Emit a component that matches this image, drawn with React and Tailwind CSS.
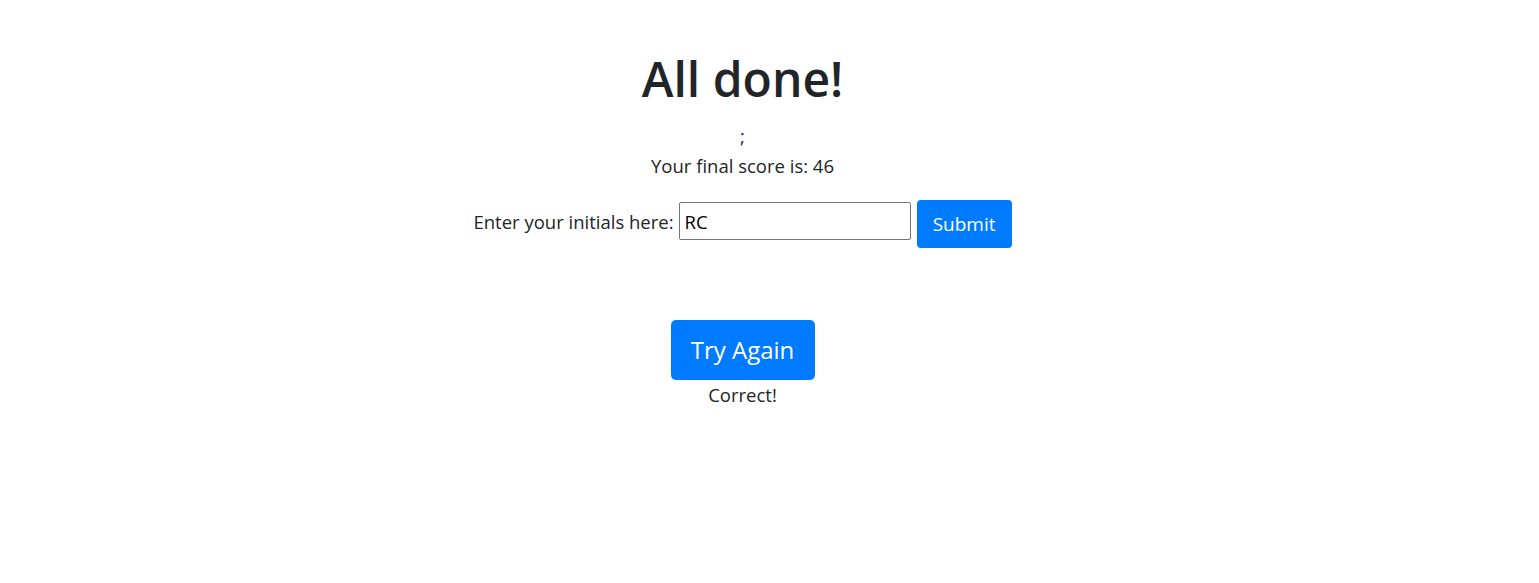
import React, { useState } from 'react';

const App = () => {
  const [initials, setInitials] = useState('RC');

  return (
    <div className="min-h-screen bg-white text-[#212529] font-['Open_Sans',sans-serif]">
      <div className="flex flex-col items-center pr-[54px] pt-[50px] text-center">
        <h1 className="text-[48px] leading-[58px] font-semibold">All done!</h1>
        <p className="mt-[16px] text-[18.5px] leading-[24px]">;</p>
        <p className="mt-[6px] text-[18.5px] leading-[24px]">Your final score is: 46</p>
        <form className="mt-[22px] flex items-start text-[18.5px]" onSubmit={(e) => e.preventDefault()}>
          <label htmlFor="initials" className="mr-[5px] leading-[44px]">
            Enter your initials here:
          </label>
          <input
            id="initials"
            type="text"
            value={initials}
            onChange={(e) => setInitials(e.target.value)}
            className="mt-[2px] h-[38px] w-[232px] rounded-[2px] border border-[#767676] px-[5px] text-[18.5px] text-black outline-none"
          />
          <button
            type="submit"
            className="ml-[6px] h-[48px] w-[95px] rounded-[4px] bg-[#007bff] text-[19px] text-white"
          >
            Submit
          </button>
        </form>
        <button
          type="button"
          className="mt-[72px] h-[60px] w-[144px] rounded-[5px] bg-[#007bff] text-[24px] text-white"
        >
          Try Again
        </button>
        <p className="mt-[3px] text-[18.5px] leading-[24px]">Correct!</p>
      </div>
    </div>
  );
};

export default App;
